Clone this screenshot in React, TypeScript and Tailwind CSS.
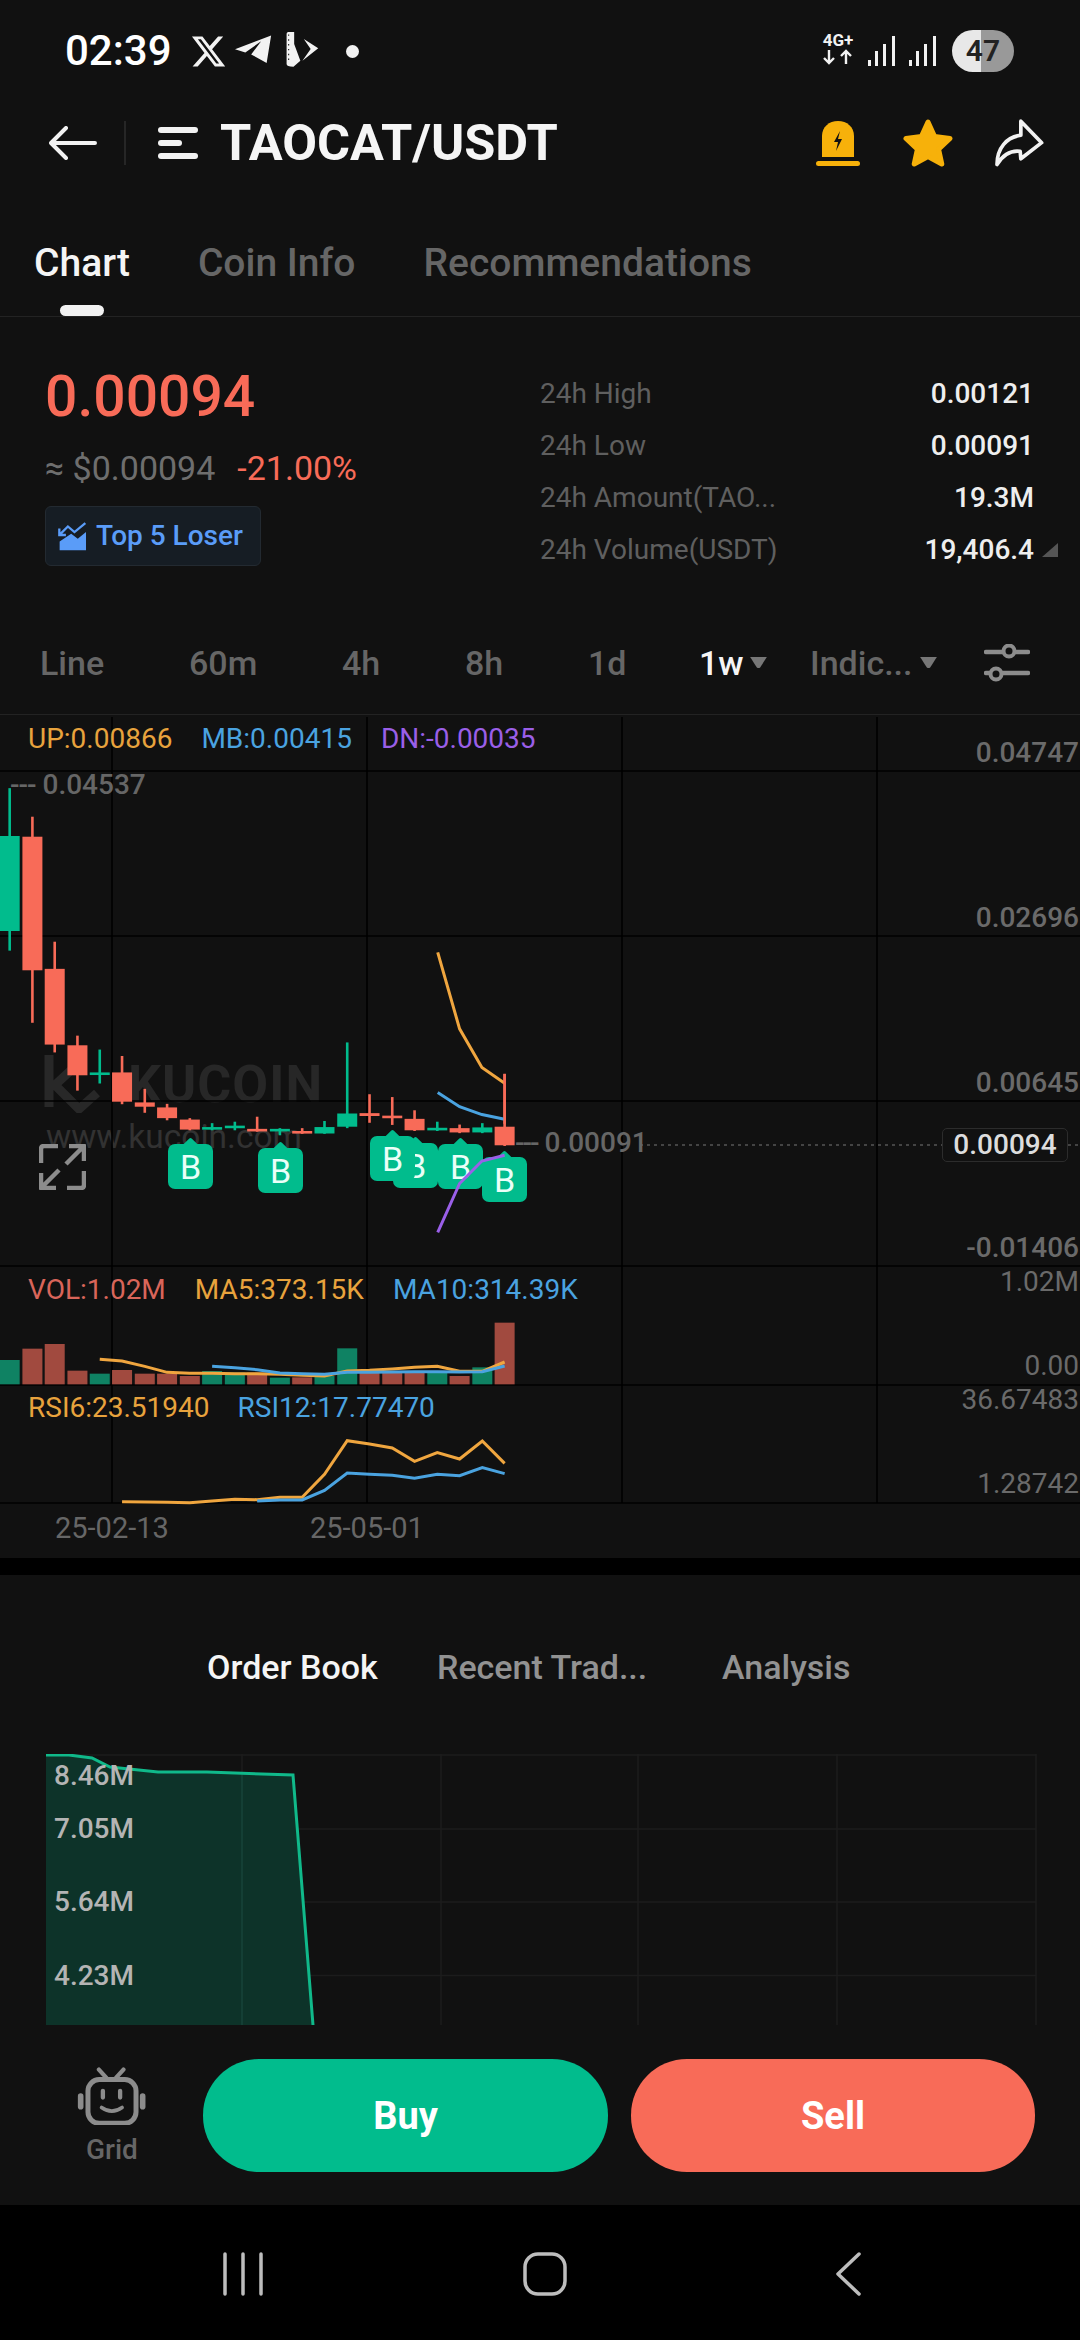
import { FaXTwitter } from 'react-icons/fa6'

const GREEN = '#01bc8d'
const RED = '#f86b58'

// chart coordinates below were read off the screenshot, so they get scaled here
const sx = (z: number) => z / 2.376
const sy = (z: number) => 6 + z / 2.8
const vy = (z: number) => 546 + z / 3

const toPoints = (pts: number[][], fy: (z: number) => number) =>
  pts.map(([x, y]) => `${sx(x)},${fy(y)}`).join(' ')

const candles = [
  { x: 23, up: true, high: 188, low: 643, top: 322, bottom: 588 },
  { x: 77, up: false, high: 268, low: 845, top: 324, bottom: 698 },
  { x: 130, up: false, high: 618, low: 928, top: 694, bottom: 906 },
  { x: 184, up: false, high: 881, low: 1035, top: 908, bottom: 992 },
  { x: 237, up: true, high: 920, low: 1015, top: 984, bottom: 990 },
  { x: 290, up: false, high: 938, low: 1073, top: 984, bottom: 1066 },
  { x: 344, up: false, high: 1030, low: 1097, top: 1068, bottom: 1080 },
  { x: 397, up: false, high: 1072, low: 1118, top: 1082, bottom: 1112 },
  { x: 451, up: false, high: 1112, low: 1146, top: 1116, bottom: 1144 },
  { x: 504, up: true, high: 1126, low: 1146, top: 1137, bottom: 1143 },
  { x: 558, up: true, high: 1122, low: 1146, top: 1133, bottom: 1140 },
  { x: 611, up: false, high: 1108, low: 1150, top: 1142, bottom: 1148 },
  { x: 665, up: true, high: 1140, low: 1160, top: 1142, bottom: 1147 },
  { x: 718, up: false, high: 1140, low: 1156, top: 1148, bottom: 1155 },
  { x: 771, up: true, high: 1120, low: 1156, top: 1137, bottom: 1155 },
  { x: 825, up: true, high: 900, low: 1140, top: 1099, bottom: 1136 },
  { x: 878, up: false, high: 1045, low: 1125, top: 1098, bottom: 1106 },
  { x: 932, up: false, high: 1053, low: 1131, top: 1105, bottom: 1112 },
  { x: 985, up: false, high: 1090, low: 1148, top: 1114, bottom: 1146 },
  { x: 1039, up: true, high: 1122, low: 1148, top: 1139, bottom: 1146 },
  { x: 1092, up: false, high: 1130, low: 1154, top: 1140, bottom: 1152 },
  { x: 1146, up: true, high: 1126, low: 1154, top: 1138, bottom: 1152 },
  { x: 1199, up: false, high: 988, low: 1190, top: 1136, bottom: 1188 },
]

const volumeTops = [297, 263, 249, 329, 338, 327, 338, 338, 345, 330, 335, 335, 350, 349, 345, 262, 335, 335, 335, 335, 345, 319, 185]

const ma5 = [[237, 295], [290, 300], [344, 316], [397, 334], [451, 337], [504, 337], [558, 338], [611, 338], [665, 340], [718, 343], [771, 345], [825, 330], [878, 328], [932, 324], [985, 319], [1039, 316], [1092, 331], [1146, 331], [1199, 303]]
const ma10 = [[504, 316], [558, 320], [611, 326], [665, 336], [718, 338], [771, 340], [825, 334], [878, 334], [932, 333], [985, 332], [1039, 332], [1092, 333], [1146, 332], [1199, 315]]
const rsi6 = [[290, 722], [344, 723], [397, 724], [451, 725], [504, 720], [558, 715], [611, 716], [665, 709], [718, 709], [771, 640], [825, 539], [878, 549], [932, 561], [985, 601], [1039, 575], [1092, 594], [1146, 540], [1199, 607]]
const rsi12 = [[611, 720], [665, 717], [718, 717], [771, 688], [825, 636], [878, 640], [932, 643], [985, 652], [1039, 640], [1092, 644], [1146, 620], [1199, 638]]

const markers = [
  'left-[168px] top-[429px]',
  'left-[258px] top-[433px]',
  'left-[393px] top-[428px]',
  'left-[370px] top-[421px]',
  'left-[438px] top-[429px]',
  'left-[482px] top-[442px]',
]

const intervals = [
  { label: 'Line', cls: 'left-[40px]' },
  { label: '60m', cls: 'left-[189px]' },
  { label: '4h', cls: 'left-[342px]' },
  { label: '8h', cls: 'left-[465px]' },
  { label: '1d', cls: 'left-[588px]' },
]

const stats = [
  { label: '24h High', value: '0.00121' },
  { label: '24h Low', value: '0.00091' },
  { label: '24h Amount(TAO...', value: '19.3M' },
  { label: '24h Volume(USDT)', value: '19,406.4' },
]

function StatusBar() {
  return (
    <div className="relative h-[102px] shrink-0 flex items-center justify-between pl-[65px] pr-[66px] text-white">
      <div className="flex items-center">
        <span className="text-[42px] font-medium leading-none w-[125px]">02:39</span>
        <FaXTwitter className="w-[37px] h-[37px] text-[#f2f2f2]" />
        <svg viewBox="170 45 250 110" className="w-[86px] h-[38px] ml-[8px]" fill="#f2f2f2">
          <path d="M170 95 L275 55 L262 135 L217 110 L246 72 L200 104 Z" />
          <path d="M320 50 Q320 44 330 44 L342 44 L342 80 L360 128 L340 146 Q320 146 320 138 Z" />
          <path d="M370 65 L412 92 L366 128 L390 94 Z" />
          <path d="M326 52v4M326 66v4M326 80v4M326 94v4M326 108v4M326 122v4" stroke="#111" strokeWidth="3" />
        </svg>
        <span className="w-[13px] h-[13px] rounded-full bg-[#f2f2f2] ml-[25px]" />
      </div>
      <div className="flex items-center">
        <div className="relative w-[36px] h-[40px] flex flex-col items-center">
          <span className="text-[17px] font-bold leading-[18px] text-[#f2f2f2]">4G+</span>
          <svg viewBox="0 0 36 16" className="w-[36px] h-[16px]" fill="none" stroke="#f2f2f2" strokeWidth="2.4">
            <path d="M9 1v13M4 9l5 5 5-5M26 15V2M21 7l5-5 5 5" />
          </svg>
        </div>
        <svg viewBox="0 0 28 30" className="w-[28px] h-[30px] ml-[12px]" fill="#f2f2f2">
          <path d="M0 24h3v6H0zM7 15h3v15H7zM15 8h3v22h-3zM24 0h3v30h-3z" />
        </svg>
        <svg viewBox="0 0 28 30" className="w-[28px] h-[30px] ml-[13px]" fill="#f2f2f2">
          <path d="M0 24h3v6H0zM7 15h3v15H7zM15 8h3v22h-3zM24 0h3v30h-3z" />
        </svg>
        <div className="relative w-[62px] h-[42px] ml-[15px] rounded-full overflow-hidden flex items-center justify-center bg-[linear-gradient(90deg,#e8e8e8_46%,#999999_46%)]">
          <span className="text-[30px] font-semibold leading-none text-[#222]">47</span>
        </div>
      </div>
    </div>
  )
}

function Header() {
  return (
    <div className="h-[82px] shrink-0 flex items-center pl-[49px] pr-[36px]">
      <svg viewBox="0 0 48 34" className="w-[48px] h-[34px]" fill="none" stroke="#f2f2f2" strokeWidth="4" strokeLinecap="round" strokeLinejoin="round">
        <path d="M3 17h43M17 2L2 17l15 15" />
      </svg>
      <span className="w-[2px] h-[44px] bg-[#262626] ml-[27px]" />
      <svg viewBox="0 0 40 34" className="w-[40px] h-[34px] ml-[32px]" fill="#f2f2f2">
        <rect x="0" y="1" width="40" height="6" rx="3" />
        <rect x="0" y="14" width="24" height="6" rx="3" />
        <rect x="0" y="27" width="40" height="6" rx="3" />
      </svg>
      <span className="ml-[22px] text-[50.5px] font-bold leading-none text-[#f5f5f5]">TAOCAT/USDT</span>
      <svg viewBox="0 0 44 46" className="w-[44px] h-[46px] ml-auto" fill="#f7b10a">
        <path d="M6 37V16C6 7 13 1 22 1s16 6 16 15v21z" />
        <rect x="0" y="41" width="44" height="5" rx="2.5" />
        <path d="M24 11l-6 11h4l-2 9 6-12h-4z" fill="#111" />
      </svg>
      <svg viewBox="0 0 50 48" className="w-[50px] h-[48px] ml-[43px]" fill="#f7b10a" stroke="#f7b10a" strokeWidth="5" strokeLinejoin="round">
        <path d="M25 3l6.6 14.6L47 19.5 35.6 30.3 38.8 45 25 37.5 11.2 45l3.2-14.7L3 19.5l15.4-1.9z" />
      </svg>
      <svg viewBox="555 292 146 142" className="w-[49px] h-[48px] ml-[42px]" fill="none" stroke="#f2f2f2" strokeWidth="11" strokeLinejoin="round" strokeLinecap="round">
        <path d="M561 427C561 378 590 345 632 340L632 298L694 362L632 410L630 388C600 384 578 400 561 427Z" />
      </svg>
    </div>
  )
}

function Tabs() {
  return (
    <div className="relative h-[133px] shrink-0 border-b border-[#232323]">
      <div className="flex items-center gap-[68px] pl-[34px] pt-[56px] text-[39px] font-medium leading-[46px] text-[#666]">
        <span className="text-[#f5f5f5]">Chart</span>
        <span>Coin Info</span>
        <span>Recommendations</span>
      </div>
      <span className="absolute left-[60px] bottom-0 w-[44px] h-[11px] rounded-full bg-[#f2f2f2]" />
    </div>
  )
}

function Summary() {
  return (
    <div className="h-[303px] shrink-0 flex pt-[50px] pl-[45px] pr-[22px]">
      <div className="w-[495px]">
        <div className="text-[57px] font-medium leading-[60px] text-[#f86b58]">0.00094</div>
        <div className="mt-[23px] flex gap-[22px] text-[34px] leading-[36px]">
          <span className="text-[#6e6e6e]">≈ $0.00094</span>
          <span className="text-[#f86b58]">-21.00%</span>
        </div>
        <div className="mt-[20px] w-[216px] h-[60px] rounded-[6px] border border-[#232a31] bg-[#161d24] flex items-center pl-[12px]">
          <svg viewBox="55 62 88 90" className="w-[29px] h-[30px]" fill="none" stroke="#5a9cf8" strokeWidth="7">
            <path d="M60 150v-26l35-24 20 15 25-20v55z" fill="#5a9cf8" stroke="none" />
            <path d="M138 68l-33 27-20-17-24 24M59 84v20h20" />
          </svg>
          <span className="ml-[9px] text-[28px] font-medium leading-none text-[#5a9cf8]">Top 5 Loser</span>
        </div>
      </div>
      <div className="flex-1 flex flex-col pt-[1px] text-[28px] leading-[52px]">
        {stats.map((row, i) => (
          <div key={row.label} className="relative flex justify-between pr-[24px]">
            <span className="text-[#5f5f5f]">{row.label}</span>
            <span className="font-medium text-[#eeeeee]">{row.value}</span>
            {i === 3 && (
              <svg viewBox="0 0 16 14" className="absolute right-0 top-[19px] w-[16px] h-[14px]" fill="#555">
                <path d="M16 0v14H0z" />
              </svg>
            )}
          </div>
        ))}
      </div>
    </div>
  )
}

function Intervals() {
  return (
    <div className="relative h-[94px] shrink-0 text-[34px] font-medium leading-[40px] text-[#666]">
      {intervals.map((item) => (
        <span key={item.label} className={`absolute top-[23px] ${item.cls}`}>
          {item.label}
        </span>
      ))}
      <span className="absolute top-[23px] left-[699px] text-[#f5f5f5]">1w</span>
      <svg viewBox="0 0 20 14" className="absolute left-[749px] top-[36px] w-[19px] h-[13px]" fill="#777">
        <path d="M1 1h18l-7 11q-2 2-4 0z" />
      </svg>
      <span className="absolute top-[23px] left-[810px]">Indic...</span>
      <svg viewBox="0 0 20 14" className="absolute left-[919px] top-[36px] w-[19px] h-[13px]" fill="#777">
        <path d="M1 1h18l-7 11q-2 2-4 0z" />
      </svg>
      <svg viewBox="0 0 46 38" className="absolute left-[984px] top-[24px] w-[46px] h-[38px]" fill="none" stroke="#8c8c8c" strokeWidth="4.5" strokeLinecap="round">
        <path d="M2 8h16M32 8h12M2 29h3M19 29h25" />
        <circle cx="25" cy="7" r="5.5" strokeWidth="4" />
        <circle cx="12" cy="30" r="5.5" strokeWidth="4" />
      </svg>
    </div>
  )
}

function Chart() {
  return (
    <div className="relative h-[844px] shrink-0 overflow-hidden border-t border-[#232323] text-[28px] leading-[32px]">
      {/* watermark */}
      <svg viewBox="0 0 60 60" className="absolute left-[43px] top-[338px] w-[60px] h-[60px]" fill="none" stroke="#282828" strokeWidth="9">
        <path d="M6 2v52M12 32L38 8M10 30l26 26 18-16" />
      </svg>
      <span className="absolute left-[128px] top-[340px] text-[52px] font-bold leading-[60px] tracking-[1px] text-[#272727]">KUCOIN</span>
      <span className="absolute left-[46px] top-[402px] text-[33.5px] leading-[40px] text-[#323232]">www.kucoin.com</span>

      <svg viewBox="0 0 1080 844" className="absolute inset-0 w-[1080px] h-[844px]" fill="none">
        {[56, 221, 386, 551, 670, 788].map((y) => (
          <path key={y} d={`M0 ${y}H1080`} stroke="#000" strokeWidth="1.6" />
        ))}
        {[112, 367, 622, 877].map((x) => (
          <path key={x} d={`M${x} 2V788`} stroke="#000" strokeWidth="1.6" />
        ))}
        <path d="M640 430H942M1068 430H1080" stroke="#555" strokeWidth="1.6" strokeDasharray="3 4" />

        {candles.map((c, i) => {
          const color = c.up ? GREEN : RED
          return (
            <g key={i} fill={color}>
              <rect x={sx(c.x) - 1.3} y={sy(c.high)} width="2.6" height={(c.low - c.high) / 2.8} />
              <rect x={sx(c.x) - 10} y={sy(c.top)} width="20" height={Math.max((c.bottom - c.top) / 2.8, 2.6)} />
            </g>
          )
        })}

        {candles.map((c, i) => (
          <rect
            key={i}
            x={sx(c.x) - 10}
            y={vy(volumeTops[i])}
            width="20"
            height={(370 - volumeTops[i]) / 3}
            fill={c.up ? '#0f8263' : '#a14a3f'}
          />
        ))}

        <polyline points={toPoints(ma5, vy)} stroke="#f0a63f" strokeWidth="3" />
        <polyline points={toPoints(ma10, vy)} stroke="#4aa3e0" strokeWidth="3" />
        <polyline points={toPoints(rsi6, vy)} stroke="#f0a63f" strokeWidth="3" />
        <polyline points={toPoints(rsi12, vy)} stroke="#4aa3e0" strokeWidth="3" />
      </svg>

      {markers.map((cls) => (
        <div key={cls} className={`absolute ${cls} w-[45px] h-[45px] rounded-[7px] bg-[#01bc8d] flex items-center justify-center text-[34px] text-[#eafff8]`}>
          <span className="absolute left-[16px] top-[-4px] w-[13px] h-[13px] rotate-45 rounded-[2px] bg-[#01bc8d]" />
          <span className="relative">B</span>
        </div>
      ))}

      <svg viewBox="0 0 1080 844" className="absolute inset-0 w-[1080px] h-[844px]" fill="none" strokeWidth="3">
        <polyline points={toPoints([[1040, 648], [1092, 862], [1145, 970], [1199, 1014]], sy)} stroke="#f0a63f" />
        <polyline points={toPoints([[1040, 1040], [1092, 1080], [1145, 1102], [1199, 1115]], sy)} stroke="#4aa3e0" />
        <polyline points={toPoints([[1040, 1432], [1092, 1295], [1145, 1232], [1199, 1216]], sy)} stroke="#9a5fe8" />
        <rect x={sx(1199) - 1.3} y={sy(988)} width="2.6" height="50" fill={RED} stroke="none" />
      </svg>

      <svg viewBox="0 0 47 46" className="absolute left-[39px] top-[429px] w-[47px] h-[46px]" fill="none" stroke="#8c8c8c" strokeWidth="4.5" strokeLinejoin="round">
        <path d="M2 19V5Q2 2 5 2H19M45 2L27 20M30 2H45V17M2 44L20 26M2 29V44H17M45 27V41Q45 44 42 44H28" />
      </svg>

      <div className="absolute left-[28px] top-[8px] flex gap-[29px]">
        <span className="text-[#e8a33d]">UP:0.00866</span>
        <span className="text-[#4aa3e0]">MB:0.00415</span>
        <span className="text-[#9a5fe8]">DN:-0.00035</span>
      </div>
      <span className="absolute left-[10px] top-[54px] font-medium text-[#666]">
        <span className="tracking-[-1px]">---</span> 0.04537
      </span>
      <span className="absolute left-[515px] top-[412px] font-medium text-[#666]">
        <span className="tracking-[-2px]">---</span> 0.00091
      </span>

      <span className="absolute right-[1px] top-[22px] font-medium text-[#6a6a6a]">0.04747</span>
      <span className="absolute right-[1px] top-[187px] font-medium text-[#6a6a6a]">0.02696</span>
      <span className="absolute right-[1px] top-[352px] font-medium text-[#6a6a6a]">0.00645</span>
      <span className="absolute right-[1px] top-[517px] font-medium text-[#6a6a6a]">-0.01406</span>
      <span className="absolute right-[1px] top-[551px] text-[#6a6a6a]">1.02M</span>
      <span className="absolute right-[1px] top-[635px] text-[#6a6a6a]">0.00</span>
      <span className="absolute right-[1px] top-[669px] text-[#6a6a6a]">36.67483</span>
      <span className="absolute right-[1px] top-[753px] text-[#6a6a6a]">1.28742</span>

      <span className="absolute left-[942px] top-[413px] w-[126px] h-[34px] rounded-[5px] border border-[#2c2c2c] bg-[#111] flex items-center justify-center font-medium text-[#dddddd]">
        0.00094
      </span>

      <div className="absolute left-[28px] top-[559px] flex gap-[29px]">
        <span className="text-[#d9655a]">VOL:1.02M</span>
        <span className="text-[#e8a33d]">MA5:373.15K</span>
        <span className="text-[#4aa3e0]">MA10:314.39K</span>
      </div>
      <div className="absolute left-[28px] top-[677px] flex gap-[28px]">
        <span className="text-[#e8a33d]">RSI6:23.51940</span>
        <span className="text-[#4aa3e0]">RSI12:17.77470</span>
      </div>
      <span className="absolute left-[55px] top-[797px] text-[29px] text-[#666]">25-02-13</span>
      <span className="absolute left-[310px] top-[797px] text-[29px] text-[#666]">25-05-01</span>
    </div>
  )
}

function OrderBook() {
  return (
    <div className="flex-1 flex flex-col">
      <div className="h-[179px] shrink-0 relative text-[34px] font-medium leading-[40px] text-[#929292]">
        <span className="absolute left-[207px] top-[72px] text-[#f5f5f5]">Order Book</span>
        <span className="absolute left-[437px] top-[72px]">Recent Trad...</span>
        <span className="absolute left-[722px] top-[72px]">Analysis</span>
      </div>
      <div className="relative h-[271px] shrink-0 overflow-hidden text-[28px] font-medium leading-[32px] text-[#b4b4b4]">
        <svg viewBox="0 0 1080 271" className="absolute inset-0 w-[1080px] h-[271px]" fill="none">
          <path d="M46 1H1036M46 75H1036M46 148H1036M46 221.500H1036M242 0V271M441 0V271M638 0V271M837 0V271M1036 0V271" stroke="#1c1c1c" strokeWidth="1.5" />
          <path d="M46 1H69L92 4L110 13L158 18L207 18L293 21L313 271H46Z" fill="#0d3329" />
          <path d="M242 18V271" stroke="#17443a" strokeWidth="1.5" />
          <path d="M46 1H69L92 4L110 13L158 18L207 18L293 21L313 271" stroke="#10b98a" strokeWidth="3" />
        </svg>
        <span className="absolute left-[54px] top-[6px]">8.46M</span>
        <span className="absolute left-[54px] top-[59px]">7.05M</span>
        <span className="absolute left-[54px] top-[132px]">5.64M</span>
        <span className="absolute left-[54px] top-[206px]">4.23M</span>
      </div>
    </div>
  )
}

function TradeBar() {
  return (
    <div className="h-[180px] shrink-0 flex pt-[34px] pl-[45px] pr-[45px]">
      <div className="w-[158px] shrink-0 flex flex-col items-start">
        <svg viewBox="50 50 215 175" className="w-[72px] h-[58px] ml-[31px] mt-[8px]" fill="none" stroke="#8c8c8c" strokeLinecap="round">
          <rect x="85" y="88" width="145" height="132" rx="34" strokeWidth="15" />
          <path d="M118 58l22 24M192 58l-22 24" strokeWidth="13" />
          <path d="M63 138v32M250 138v32" strokeWidth="17" />
          <path d="M130 122v20M182 122v20" strokeWidth="13" />
          <path d="M126 172q31 22 62 0" strokeWidth="11" />
        </svg>
        <span className="ml-[41px] mt-[9px] text-[28px] font-medium leading-[32px] text-[#666]">Grid</span>
      </div>
      <div className="w-[405px] h-[113px] rounded-[56px] bg-[#01bc8d] flex items-center justify-center pt-[2px] text-[38px] font-bold text-white">
        Buy
      </div>
      <div className="w-[404px] h-[113px] ml-[23px] rounded-[56px] bg-[#f86b58] flex items-center justify-center pt-[2px] text-[38px] font-bold text-white">
        Sell
      </div>
    </div>
  )
}

function NavBar() {
  return (
    <div className="h-[136px] shrink-0 bg-black relative">
      <svg viewBox="0 0 40 44" className="absolute left-[223px] top-[47px] w-[40px] h-[44px]" fill="none" stroke="#bdbdbd" strokeWidth="3.5" strokeLinecap="round">
        <path d="M2 2v40M20 2v40M38 2v40" />
      </svg>
      <svg viewBox="0 0 44 44" className="absolute left-[523px] top-[47px] w-[44px] h-[44px]" fill="none" stroke="#bdbdbd" strokeWidth="3.5">
        <rect x="2" y="2" width="40" height="40" rx="13" />
      </svg>
      <svg viewBox="0 0 26 44" className="absolute left-[835px] top-[47px] w-[26px] h-[44px]" fill="none" stroke="#bdbdbd" strokeWidth="3.5" strokeLinecap="round" strokeLinejoin="round">
        <path d="M24 2L3 22l21 20" />
      </svg>
    </div>
  )
}

export default function App() {
  return (
    <div className="w-[1080px] h-[2340px] bg-[#111111] flex flex-col overflow-hidden font-['Roboto',sans-serif]">
      <StatusBar />
      <Header />
      <Tabs />
      <Summary />
      <Intervals />
      <Chart />
      <div className="h-[17px] shrink-0 bg-black" />
      <OrderBook />
      <TradeBar />
      <NavBar />
    </div>
  )
}
